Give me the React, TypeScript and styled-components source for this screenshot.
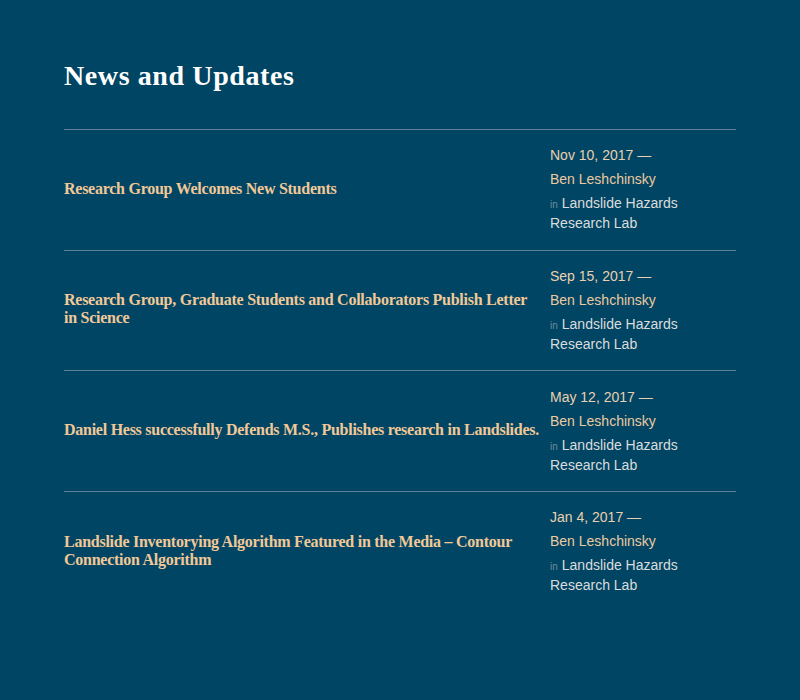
import React from "react";
import styled, { createGlobalStyle } from "styled-components";

const GlobalStyle = createGlobalStyle`
  html, body {
    margin: 0;
    padding: 0;
    background: #004563;
  }
  body {
    font-family: "Liberation Sans", Arial, sans-serif;
  }
`;

const Page = styled.main`
  width: 800px;
  height: 700px;
  box-sizing: border-box;
  padding: 58px 64px 0 64px;
  background: #004563;
`;

const Heading = styled.h1`
  margin: 0 0 35px 0;
  font-family: "Liberation Serif", "Times New Roman", serif;
  font-weight: 700;
  font-size: 28px;
  letter-spacing: 0.6px;
  line-height: 36px;
  color: #ffffff;
`;

const List = styled.ul`
  list-style: none;
  margin: 0;
  padding: 0;
`;

const Item = styled.li`
  display: grid;
  grid-template-columns: 476px 186px;
  column-gap: 10px;
  align-items: center;
  border-top: 1px solid #5d8197;
  height: 120.67px;
  box-sizing: border-box;
  padding-bottom: 2px;
`;

const Title = styled.a`
  font-family: "Liberation Serif", "Times New Roman", serif;
  font-weight: 700;
  font-size: 16px;
  letter-spacing: -0.26px;
  line-height: 18px;
  color: #f1c898;
  text-decoration: none;
`;

const Meta = styled.div`
  display: flex;
  flex-direction: column;
  gap: 4px;
  font-size: 14px;
  line-height: 20px;
  padding-top: 1px;
`;

const DateLine = styled.span`
  color: #ead0b0;
`;

const Author = styled.span`
  color: #ecc9a0;
`;

const Category = styled.span`
  color: #dcdcdc;
  line-height: 20px;
`;

const InLabel = styled.span`
  font-size: 10px;
  line-height: 10px;
  color: #6e8c9c;
  margin-right: 4px;
`;

const posts = [
  { title: "Research Group Welcomes New Students", date: "Nov 10, 2017" },
  {
    title:
      "Research Group, Graduate Students and Collaborators Publish Letter in Science",
    date: "Sep 15, 2017",
  },
  {
    title:
      "Daniel Hess successfully Defends M.S., Publishes research in Landslides.",
    date: "May 12, 2017",
  },
  {
    title:
      "Landslide Inventorying Algorithm Featured in the Media – Contour Connection Algorithm",
    date: "Jan 4, 2017",
  },
];

export default function App() {
  return (
    <>
      <GlobalStyle />
      <Page>
        <Heading>News and Updates</Heading>
        <List>
          {posts.map((p) => (
            <Item key={p.title}>
              <Title href="#">{p.title}</Title>
              <Meta>
                <DateLine>{p.date} —</DateLine>
                <Author>Ben Leshchinsky</Author>
                <Category>
                  <InLabel>in</InLabel>Landslide Hazards Research Lab
                </Category>
              </Meta>
            </Item>
          ))}
        </List>
      </Page>
    </>
  );
}
